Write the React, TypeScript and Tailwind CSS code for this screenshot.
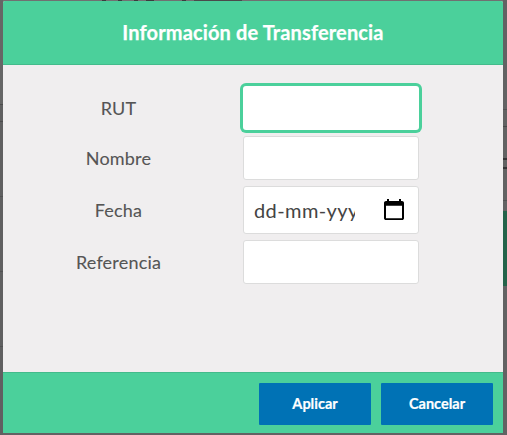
import type { ReactNode } from 'react';

function CalendarIcon() {
  return (
    <svg viewBox="0 0 24 24" className="mb-0.5 h-[23px] w-6 shrink-0" preserveAspectRatio="none" fill="#000" aria-hidden="true">
      <path d="M20 3h-1V1h-2v2H7V1H5v2H4c-1.1 0-2 .9-2 2v16c0 1.1.9 2 2 2h16c1.1 0 2-.9 2-2V5c0-1.1-.9-2-2-2zm0 18H4V8h16v13z" />
    </svg>
  );
}

function Row({ label, children }: { label: string; children: ReactNode }) {
  return (
    <div className="flex items-center">
      <label className="w-[231px] text-center text-[18px] leading-6 tracking-[0.2px] text-[#555] [-webkit-text-stroke:0.1px_#555]">
        {label}
      </label>
      <div className="ml-[9px] w-44">{children}</div>
    </div>
  );
}

const field = 'block w-full rounded-[3px] border border-[#dcdcdc] bg-white outline-none';
const button =
  'h-[42px] w-28 rounded-[1px] bg-[#0072b5] text-[14.5px] font-bold text-white [-webkit-text-stroke:0.2px_#fff]';

function PageEdge({ side }: { side: 'left' | 'right' }) {
  if (side === 'left') {
    return (
      <div className="flex w-[3px] shrink-0 flex-col bg-[#606061]">
        <div className="h-[105px] border-b border-[#4c4c4d] bg-[#666]" />
        <div className="h-[17px] border-b border-[#4c4c4d]" />
        <div className="h-[75px] border-b border-[#525253]" />
        <div className="h-[75px] border-b border-[#525253]" />
        <div className="h-[75px] border-b border-[#525253]" />
      </div>
    );
  }
  return (
    <div className="flex w-1 shrink-0 flex-col bg-[#626263]">
      <div className="h-[110px] border-b border-[#515152]" />
      <div className="h-[17px] border-b border-[#484849]" />
      <div className="h-[33px] border-b-2 border-[#343435]" />
      <div className="h-[9px] border-b-2 border-[#343435]" />
      <div className="h-8 border-b border-[#515152]" />
      <div className="h-[10px]" />
      <div className="h-[75px] bg-[#24634a]" />
    </div>
  );
}

function TopEdge() {
  return (
    <div className="flex h-px bg-[#707071] pl-[99px]">
      <div className="h-px w-1 bg-[#3c3c3d]" />
      <div className="ml-3 h-px w-1 bg-[#3c3c3d]" />
      <div className="ml-3 h-px w-1 bg-[#3c3c3d]" />
      <div className="ml-2 h-px w-2 bg-[#3c3c3d]" />
      <div className="ml-7 h-px w-1 bg-[#3c3c3d]" />
      <div className="ml-2 h-px w-12 bg-[#4a4a4b]" />
    </div>
  );
}

export default function App() {
  return (
    <div className="flex h-[435px] w-[507px] overflow-hidden bg-[#626263] font-[Lato,sans-serif]">
      <PageEdge side="left" />
      <div className="w-[500px] shrink-0">
        <TopEdge />
        <section className="flex h-[432px] flex-col overflow-hidden rounded-t-[2px] bg-[#f0eeef]">
          <header className="flex h-16 items-center justify-center border-b border-[#43bb8b] bg-[#4bd09b] pb-0.5">
            <h1 className="text-[20px] font-bold leading-6 tracking-[0.14px] text-white [-webkit-text-stroke:0.25px_#fff]">
              Información de Transferencia
            </h1>
          </header>
          <form className="flex flex-1 flex-col gap-1.5 pt-[21px]">
            <Row label="RUT">
              <input className="block h-11 w-full rounded-[3px] bg-white shadow-[0_0_0_3px_#4bd09b] outline-none" />
            </Row>
            <Row label="Nombre">
              <input className={`${field} h-11`} />
            </Row>
            <Row label="Fecha">
              <div className={`${field} flex! h-12 items-center justify-between pl-2.5 pr-3`}>
                <span className="w-[101px] overflow-hidden whitespace-nowrap text-[20px] leading-7 tracking-[0.4px] text-[#444]">
                  dd-mm-yyyy
                </span>
                <CalendarIcon />
              </div>
            </Row>
            <Row label="Referencia">
              <input className={`${field} h-11`} />
            </Row>
          </form>
          <footer className="flex h-[61px] items-start justify-end gap-2.5 border-t border-[#43bb8b] bg-[#4bd09b] pr-2.5 pt-2.5">
            <button type="button" className={button}>
              Aplicar
            </button>
            <button type="button" className={button}>
              Cancelar
            </button>
          </footer>
        </section>
      </div>
      <PageEdge side="right" />
    </div>
  );
}
